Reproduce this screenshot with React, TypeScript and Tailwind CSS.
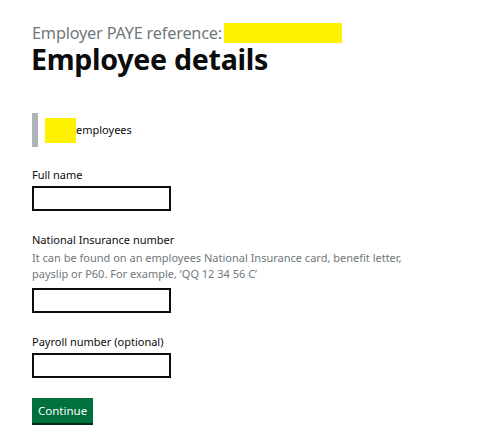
import type { FunctionComponent, JSX } from "react";

interface Field {
  id: string;
  label: string;
  hint?: string;
}

const App: FunctionComponent = (): JSX.Element => {
  const fields: Field[] = [
    { id: "full-name", label: "Full name" },
    {
      id: "nino",
      label: "National Insurance number",
      hint: "It can be found on an employees National Insurance card, benefit letter, payslip or P60. For example, ‘QQ 12 34 56 C’",
    },
    { id: "payroll", label: "Payroll number (optional)" },
  ];

  return (
    <div className="min-h-[445px] w-[480px] bg-white pl-[32px] pt-[22px] font-['Noto_Sans',sans-serif] text-[#0b0c0c]">
      <div className="flex items-center h-[22px]">
        <span className="text-[16.3px] leading-[22px] text-[#6f777b] tracking-[-0.2px]">
          Employer PAYE reference:
        </span>
        <span className="ml-[2px] inline-block w-[118px] h-[20px] bg-[#fff200]" />
      </div>
      <h1 className="text-[28.6px] leading-[30px] font-bold tracking-[-0.3px] -ml-px">
        Employee details
      </h1>
      <div className="mt-[39px] flex items-center border-l-[6px] border-[#b1b4b6] h-[34px] pl-[7px]">
        <span className="inline-block w-[31px] h-[25px] bg-[#fff200]" />
        <span className="text-[11px] leading-[16px]">employees</span>
      </div>
      <form className="mt-[20px] flex flex-col gap-[21px]">
        {fields.map(({ id, label, hint }): JSX.Element => (
          <div key={id} className="flex flex-col">
            <label htmlFor={id} className="text-[11px] leading-[16px] mb-[3px]">
              {label}
            </label>
            {hint && (
              <p className="text-[11px] leading-[16px] text-[#6f777b] w-[400px] mb-[6px] -mt-[1px]">
                {hint}
              </p>
            )}
            <input
              id={id}
              type="text"
              className="w-[139px] h-[25px] border-2 border-[#0b0c0c] bg-white outline-none"
            />
          </div>
        ))}
        <div className="-mt-[2px]">
          <button
            type="submit"
            className="h-[25px] px-[6px] bg-[#00703c] text-white text-[11.5px] leading-[25px] shadow-[0_2px_0_#002d18]"
          >
            Continue
          </button>
        </div>
      </form>
    </div>
  );
};

export default App;
